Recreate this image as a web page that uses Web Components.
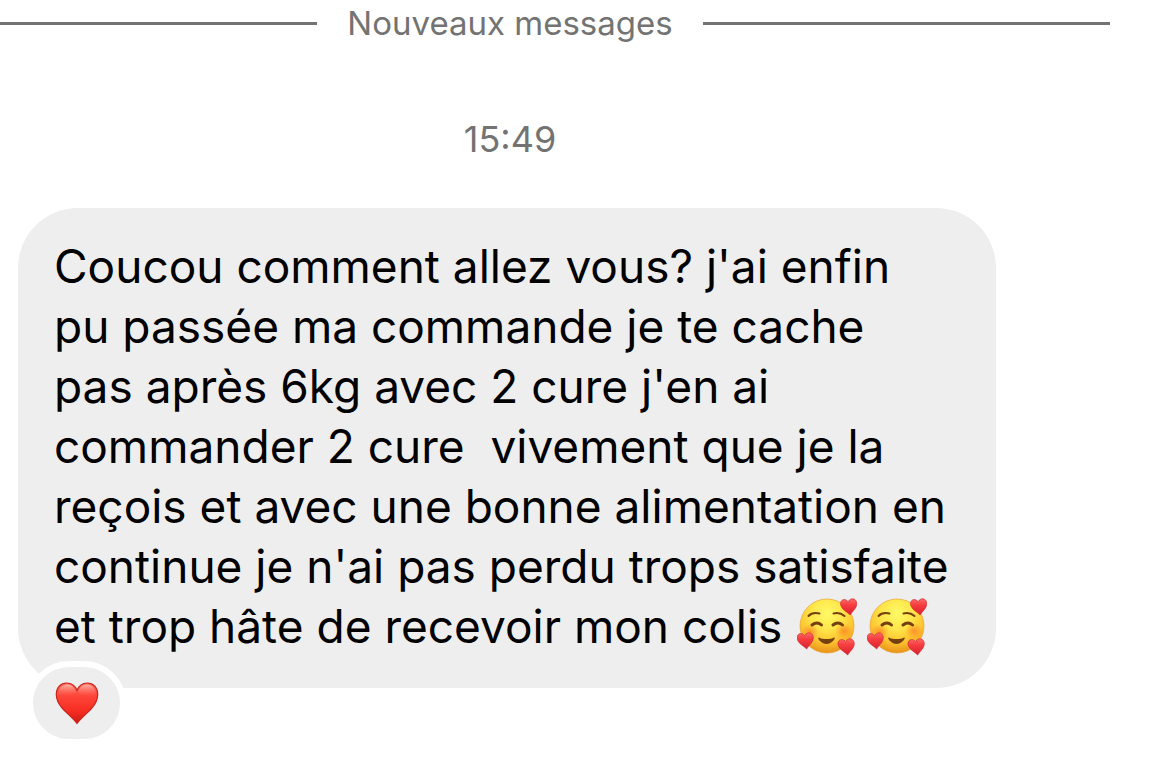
<!DOCTYPE html>
<html lang="fr">
<head>
<meta charset="utf-8">
<meta name="viewport" content="width=device-width, initial-scale=1">
<title>Messages</title>
<style>
body { margin: 0; background: #fff; font-family: Inter, "Liberation Sans", sans-serif; overflow-x: hidden; }
</style>
</head>
<body>
<chat-thread>
  <new-messages-divider slot="meta">Nouveaux messages</new-messages-divider>
  <time-stamp slot="meta">15:49</time-stamp>
  <message-bubble>Coucou comment allez vous? j'ai enfin
pu passée ma commande je te cache
pas après 6kg avec 2 cure j'en ai
commander 2 cure  vivement que je la
reçois et avec une bonne alimentation en
continue je n'ai pas perdu trops satisfaite
et trop hâte de recevoir mon colis <love-face></love-face><love-face></love-face><message-reaction slot="reaction"></message-reaction></message-bubble>
</chat-thread>

<template id="t-thread">
<style>
:host { display: block; }
/* The thread's centre line sits left of the window's, so its start runs off the edge. */
.meta { display: flex; flex-direction: column; margin: 0 60px 0 -90px; }
.messages { padding: 0 174px 0 18px; }
</style>
<div class="meta"><slot name="meta"></slot></div>
<div class="messages"><slot></slot></div>
</template>

<template id="t-divider">
<style>
:host { display: flex; align-items: center; gap: 30px; color: #737373; font-size: 33px; line-height: 47px; }
.line { flex: 1; height: 3px; background: #737373; }
</style>
<span class="line"></span><span><slot></slot></span><span class="line"></span>
</template>

<template id="t-time">
<style>
:host { display: block; padding: 68px 0 45px; color: #737373; font-size: 36px; line-height: 48px; text-align: center; }
</style>
<time datetime="15:49"><slot></slot></time>
</template>

<template id="t-bubble">
<style>
:host { display: block; }
.bubble { padding: 28px 0 32px 36px; border-radius: 60px; background: #eee; color: #000; }
p { margin: 0; font-size: 46px; line-height: 60px; white-space: pre-wrap; }
</style>
<div class="bubble"><p><slot></slot></p></div>
<slot name="reaction"></slot>
</template>

<template id="t-reaction">
<style>
:host { display: block; position: relative; width: fit-content; margin: -27px 0 0 9px; }
button { display: flex; align-items: center; justify-content: center; box-sizing: border-box; width: 99px; height: 84px; padding: 0; border: 6px solid #fff; border-radius: 42px; background: #eee; }
svg { display: block; width: 44px; height: 44px; }
</style>
<button type="button" aria-label="Réaction : cœur rouge">
<svg viewBox="0 0 44 44" aria-hidden="true">
<defs>
<linearGradient id="fill" x1="0" y1="0" x2="0" y2="1"><stop offset="0" stop-color="#ff6a5c"/><stop offset=".35" stop-color="#fd4337"/><stop offset=".7" stop-color="#f62c21"/><stop offset="1" stop-color="#c91c14"/></linearGradient>
<linearGradient id="gloss" x1="0" y1="0" x2="0" y2="1"><stop offset="0" stop-color="#ffc0b4" stop-opacity=".85"/><stop offset="1" stop-color="#ff6a5c" stop-opacity="0"/></linearGradient>
</defs>
<path d="M22 42.500C18 37 12 32.500 7.500 27.500C3.500 23 1.300 18.500 1.300 13.500C1.300 6.500 5.800 2 11.700 2C16.500 2 20.200 4.700 22 9.300C23.800 4.700 27.500 2 32.300 2C38.200 2 42.700 6.500 42.700 13.500C42.700 18.500 40.500 23 36.500 27.500C32 32.500 26 37 22 42.500Z" fill="url(#fill)" stroke="#c9251c" stroke-width="1.200"/>
<path d="M3.500 13C3.800 7 7.300 3.500 12 3.500C16.300 3.500 19.500 6 21 11C18 15 7 17 3.500 13ZM23 11C24.500 6 27.700 3.500 32 3.500C36.700 3.500 40.200 7 40.500 13C37 17 26 15 23 11Z" fill="url(#gloss)"/>
</svg>
</button>
</template>

<template id="t-face">
<style>
:host { display: inline-block; width: 60px; height: 58px; margin: 0 8px 0 2px; vertical-align: -13px; line-height: 0; white-space: normal; }
svg { display: block; width: 60px; height: 58px; }
</style>
<svg viewBox="0 0 60 58" role="img" aria-label="Visage souriant avec des cœurs">
<defs>
<radialGradient id="skin" cx=".5" cy=".27" r=".72"><stop offset="0" stop-color="#fffa68"/><stop offset=".4" stop-color="#ffe64a"/><stop offset=".75" stop-color="#fcc12e"/><stop offset="1" stop-color="#e9951c"/></radialGradient>
<radialGradient id="blush"><stop offset="0" stop-color="#fa7420" stop-opacity=".65"/><stop offset="1" stop-color="#fa7420" stop-opacity="0"/></radialGradient>
<linearGradient id="love" x1="0" y1="0" x2="0" y2="1"><stop offset="0" stop-color="#fb6a64"/><stop offset=".4" stop-color="#f63c3f"/><stop offset="1" stop-color="#d9212f"/></linearGradient>
<path id="heart" d="M1 8C-1.400 2.700 4.600-1.200 8.200 3.700C10.500-1.300 17.300.5 16.800 6.200C16.500 10.500 12.500 13 10.200 17C7.500 14 2.600 12.300 1 8Z" fill="url(#love)" stroke="#cf2733" stroke-width=".6"/>
</defs>
<circle cx="30" cy="28" r="27" fill="url(#skin)" stroke="#e59b25" stroke-width=".6"/>
<ellipse cx="13" cy="34" rx="9" ry="8" fill="url(#blush)"/>
<ellipse cx="47" cy="33" rx="9" ry="8" fill="url(#blush)"/>
<g fill="none" stroke="#74400f" stroke-linecap="round">
<path d="M11.500 18Q15 14 22.500 15.500M36.500 15.500Q43 14 47.500 18" stroke-width="2"/>
<path d="M15 27Q20 23 24.500 27M36 27Q41 23 45.500 27" stroke-width="3"/>
</g>
<path d="M22 39.500C25 41.500 34 41.500 37 39.500C38.500 39.500 37.500 41.500 36 43C32 47 27 47 23 43C21.500 41.500 20.500 39.500 22 39.500Z" fill="#74400f"/>
<use href="#heart" transform="translate(43 0)"/>
<use href="#heart" transform="translate(-.5 34)"/>
<use href="#heart" transform="translate(40.500 40)"/>
</svg>
</template>

<script>
const define = (name, templateId) => customElements.define(name, class extends HTMLElement {
  constructor() {
    super();
    const template = document.getElementById(templateId);
    this.attachShadow({ mode: 'open' }).append(template.content.cloneNode(true));
  }
});
define('chat-thread', 't-thread');
define('new-messages-divider', 't-divider');
define('time-stamp', 't-time');
define('message-bubble', 't-bubble');
define('message-reaction', 't-reaction');
define('love-face', 't-face');
</script>
</body>
</html>
